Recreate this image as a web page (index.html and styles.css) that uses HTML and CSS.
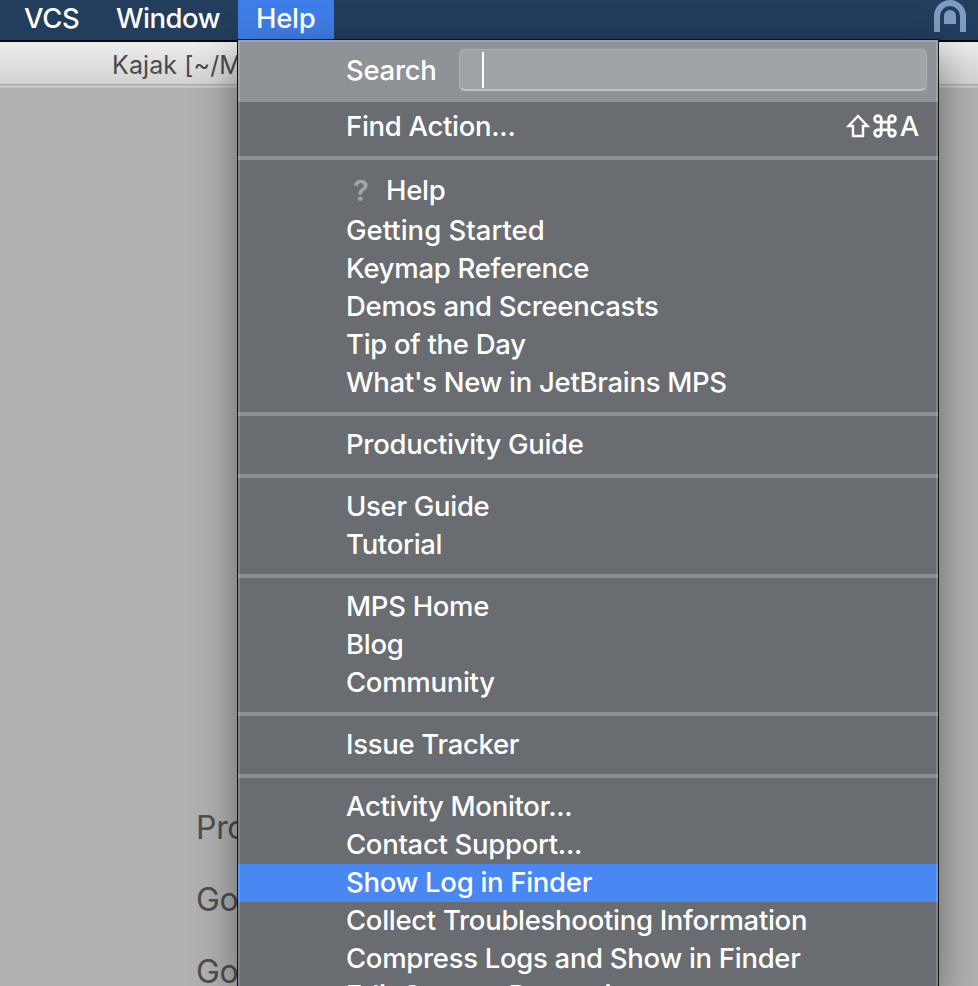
FILE: index.html
```html
<!DOCTYPE html>
<html lang="en">
<head>
<meta charset="utf-8">
<title>Kajak</title>
<link rel="stylesheet" href="styles.css">
</head>
<body>
<header class="menubar">
  <nav class="menus">
    <span class="menu-title vcs">VCS</span>
    <span class="menu-title window">Window</span>
    <span class="menu-title open">Help</span>
  </nav>
  <svg class="status-icon" width="32" height="32" viewBox="0 0 32 32">
    <path d="M0 32V16a16 16 0 0 1 32 0v16h-6V16a10 10 0 0 0-20 0v16z" fill="#7f9bc0"/>
    <path d="M10 24v-8a6 6 0 0 1 12 0v8z" fill="#7f9bc0"/>
  </svg>
</header>
<div class="titlebar">Kajak [~/MPS]</div>
<main class="welcome">
  <div>Pro</div>
  <div>Go</div>
  <div>Go</div>
</main>
<section class="dropdown">
  <div class="search">
    <label>Search</label>
    <div class="field"><i class="caret"></i></div>
  </div>
  <ul class="group first">
    <li><span>Find Action...</span>
      <span class="shortcut">
        <svg width="24" height="24" viewBox="0 0 24 24"><path d="M12 2 2.500 12h4.500v10h10v-10h4.500z" fill="none" stroke="#fff" stroke-width="2.400"/></svg>
        <svg width="24" height="24" viewBox="0 0 22 22"><path d="M7.500 7.500h7v7h-7zM7.500 7.500V4.500a3 3 0 1 0-3 3zM14.500 7.500h3a3 3 0 1 0-3-3zM14.500 14.500v3a3 3 0 1 0 3-3zM7.500 14.500h-3a3 3 0 1 0 3 3z" fill="none" stroke="#fff" stroke-width="2.600"/></svg>
        <b>A</b>
      </span>
    </li>
  </ul>
  <ul class="group">
    <li class="with-icon"><span class="question">?</span><span>Help</span></li>
    <li class="loose"><span>Getting Started</span></li>
    <li><span>Keymap Reference</span></li>
    <li><span>Demos and Screencasts</span></li>
    <li><span>Tip of the Day</span></li>
    <li><span>What's New in JetBrains MPS</span></li>
  </ul>
  <ul class="group">
    <li><span>Productivity Guide</span></li>
  </ul>
  <ul class="group">
    <li><span>User Guide</span></li>
    <li><span>Tutorial</span></li>
  </ul>
  <ul class="group">
    <li><span>MPS Home</span></li>
    <li><span>Blog</span></li>
    <li><span>Community</span></li>
  </ul>
  <ul class="group">
    <li><span>Issue Tracker</span></li>
  </ul>
  <ul class="group">
    <li><span>Activity Monitor...</span></li>
    <li><span>Contact Support...</span></li>
    <li class="selected"><span>Show Log in Finder</span></li>
    <li><span>Collect Troubleshooting Information</span></li>
    <li><span>Compress Logs and Show in Finder</span></li>
    <li class="last"><span>Edit Custom Properties...</span></li>
  </ul>
</section>
</body>
</html>
```
FILE: styles.css
```css
* { box-sizing: border-box; }
html, body { height: 100%; overflow: hidden; }
body {
  margin: 0;
  position: relative;
  background: #b1b1b1;
  font-family: Inter, "Liberation Sans", sans-serif;
  font-size: 27.5px;
  letter-spacing: -0.3px;
}
.menubar {
  display: flex;
  justify-content: space-between;
  height: 42px;
  padding-right: 12px;
  background: #233d5d;
  border-bottom: 2px solid #05080d;
  color: #fff;
  font-weight: 500;
}
.menus { display: flex; }
.menu-title { height: 39px; line-height: 37px; }
.vcs { padding-left: 24px; width: 98px; }
.window { padding-left: 18px; width: 140px; letter-spacing: -0.5px; }
.open { padding-left: 18px; width: 96px; background: #3f7ee8; }
.titlebar {
  height: 46px;
  padding-left: 112px;
  background: linear-gradient(#ededed, #d2d2d2);
  border-bottom: 3px solid #c4c4c4;
  box-shadow: inset 0 -1px #a5a5a5;
  color: #4b4b4b;
  font-size: 25px;
  letter-spacing: 0.1px;
  line-height: 46px;
}
.welcome {
  display: grid;
  grid-auto-rows: 72px;
  height: 898px;
  overflow: hidden;
  padding: 703px 0 0 196px;
  color: #4e4e4e;
  font-size: 32px;
  line-height: 73px;
}
.dropdown {
  position: absolute;
  top: 39px;
  left: 237px;
  width: 702px;
  height: 947px;
  overflow: hidden;
  background: #696d71;
  border: 1px solid #101214;
  border-bottom: 0;
  box-shadow: 0 14px 40px rgba(0, 0, 0, .42);
  color: #fff;
  font-weight: 500;
}
.dropdown::after {
  content: "";
  position: absolute;
  inset: 0;
  border: 2px solid rgba(255, 255, 255, .16);
  border-bottom: 0;
  pointer-events: none;
}
.search {
  display: flex;
  height: 62px;
  padding: 9px 11px 0 108px;
  background: #8f9397;
}
.search label { width: 113px; line-height: 42px; }
.field {
  flex: 1;
  height: 42px;
  padding: 2px 0 0 22px;
  background: #a0a4a8;
  border: 1px solid #afb2b5;
  border-bottom: 2px solid #c0c3c6;
  border-radius: 6px;
}
.caret { display: block; width: 2px; height: 36px; background: #fff; }
.group {
  list-style: none;
  margin: 0;
  padding: 10px 0;
  border-top: 4px solid #8b8f93;
}
.group.first { border-top: 0; padding-top: 6px; }
.group li {
  display: flex;
  justify-content: space-between;
  height: 38px;
  padding: 0 19px 0 108px;
  line-height: 37px;
  white-space: nowrap;
}
.group .with-icon { height: 42px; justify-content: flex-start; line-height: 41px; }
.group .loose { letter-spacing: 0; }
.group .last { line-height: 34px; }
.question { width: 40px; padding-left: 7px; color: #a3a6a9; font-size: 29px; font-weight: 600; }
.group .selected { background: #4988f2; }
.shortcut { display: flex; align-items: center; gap: 3px; height: 36px; }
.shortcut b { font-weight: 500; }
```
